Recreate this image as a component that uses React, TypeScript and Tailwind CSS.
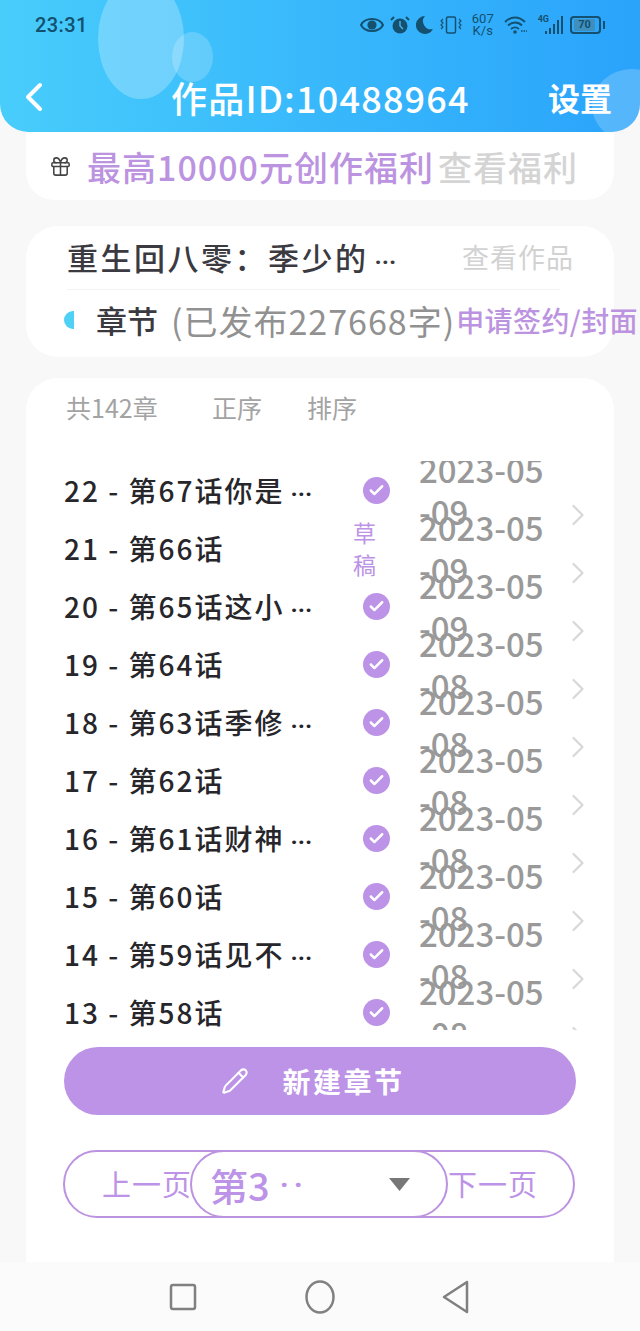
import React from "react";
import { ChevronRight, ChevronLeft, Check, Pencil, Gift } from "lucide-react";

const FONT = "font-['Noto_Sans_CJK_SC','Noto_Sans',sans-serif]";

const rows = [
  { t: "22 - 第67话你是", more: true, d: "2023-05-09", ok: true },
  { t: "21 - 第66话", d: "2023-05-09", ok: false },
  { t: "20 - 第65话这小", more: true, d: "2023-05-09", ok: true },
  { t: "19 - 第64话", d: "2023-05-08", ok: true },
  { t: "18 - 第63话季修", more: true, d: "2023-05-08", ok: true },
  { t: "17 - 第62话", d: "2023-05-08", ok: true },
  { t: "16 - 第61话财神", more: true, d: "2023-05-08", ok: true },
  { t: "15 - 第60话", d: "2023-05-08", ok: true },
  { t: "14 - 第59话见不", more: true, d: "2023-05-08", ok: true },
  { t: "13 - 第58话", d: "2023-05-08", ok: true },
  { t: "", d: "2023-05-08", ok: false, hidden: true },
];

function Dots({ className }: { className: string }) {
  return <span className={`font-['Roboto',sans-serif] font-bold tracking-normal leading-[0] ${className}`}>···</span>;
}

function StatusIcons() {
  const c = "#14506f";
  return (
    <div className="flex items-center text-[#14506f]">
      <svg width="24" height="16" viewBox="0 0 24 16" className="mr-[6px]">
        <path d="M1 8c4-8 18-8 22 0-4 8-18 8-22 0z" fill="none" stroke={c} strokeWidth="2" />
        <circle cx="12" cy="8" r="4.6" fill={c} />
      </svg>
      <svg width="20" height="20" viewBox="0 0 20 20" className="mr-[6px]">
        <circle cx="10" cy="11" r="7.5" fill={c} />
        <path d="M10 6v5l3 3" stroke="#4fb6e8" strokeWidth="1.4" fill="none" />
        <path d="M1 5l3-3M19 5l-3-3" stroke={c} strokeWidth="2" />
      </svg>
      <svg width="18" height="20" viewBox="0 0 18 20" className="mr-[6px]">
        <path d="M9 1a9 9 0 1 0 8 13A8 8 0 0 1 9 1z" fill={c} />
      </svg>
      <svg width="22" height="20" viewBox="0 0 22 20" className="mr-[10px]">
        <rect x="6.5" y="2" width="9" height="16" rx="1.5" fill="none" stroke={c} strokeWidth="1.5" />
        <path d="M3 4l-2 2 2 2-2 2 2 2-2 2M19 4l2 2-2 2 2 2-2 2 2 2" fill="none" stroke={c} strokeWidth="1.1" />
      </svg>
      <div className="flex flex-col items-center mr-[10px] text-[13px] leading-[12px] font-['Roboto',sans-serif]">
        <span>607</span>
        <span>K/s</span>
      </div>
      <svg width="24" height="18" viewBox="0 0 24 18">
        <path d="M1 6c6-6 14-6 20 0M4 9.5c4-4 10-4 14 0M7 13c2.500-2 5.500-2 8 0" fill="none" stroke={c} strokeWidth="1.8" />
        <circle cx="11" cy="16" r="1.8" fill={c} />
        <path d="M17 15h6" stroke={c} strokeWidth="1.4" strokeDasharray="1.500 1" />
      </svg>
      <span className="text-[9px] leading-none font-bold self-start mt-[2px] font-['Roboto',sans-serif] ml-[10px]">4G</span>
      <svg width="19" height="20" viewBox="0 0 19 20" className="ml-[-5px] mr-[7px]">
        <path d="M2 16v3M6 13v6M10 9v10M14 5v14M18 1v18" stroke={c} strokeWidth="2" />
      </svg>
      <div className="w-[31px] h-[18px] border-2 border-[#14506f] rounded-[4px] p-[1px] flex">
        <div className="w-[21px] h-full bg-[#3f8fbe] rounded-[1px] flex items-center justify-center text-[11px] font-bold font-['Roboto',sans-serif] ml-[1px]">70</div>
      </div>
      <div className="w-[2px] h-[8px] bg-[#14506f] ml-[2px]" />
    </div>
  );
}

function Row({ t, more, d, ok, hidden }: { t: string; more?: boolean; d: string; ok: boolean; hidden?: boolean }) {
  return (
    <div className="h-[58px] flex items-center">
      <div className="w-[288px] shrink-0 text-[28px] leading-[34px] tracking-[2px] font-medium text-[#26262b] whitespace-nowrap">
        {t}
        {more ? <Dots className="ml-[6px] text-[24px]" /> : null}
      </div>
      <div className="w-[48px] shrink-0 flex justify-center">
        {hidden ? null : ok ? (
          <span className="w-[27px] h-[27px] rounded-full bg-[#bc93e6] flex items-center justify-center">
            <Check size={17} strokeWidth={3.5} className="text-white" />
          </span>
        ) : (
          <span className="w-[24px] text-[23px] leading-[32px] text-[#bc93e6] mr-[22px]">草稿</span>
        )}
      </div>
      <div className="w-[125px] ml-[19px] text-[33px] leading-[42px] font-medium text-[#999999] text-left break-all shrink-0">{d}</div>
      <div className="w-[44px] shrink-0 flex justify-center mt-[50px] ml-[12px]">
        <ChevronRight size={36} strokeWidth={1.5} className="text-[#d8d8d8]" />
      </div>
    </div>
  );
}

export default function App() {
  return (
    <div className={`${FONT} w-[640px] h-[1331px] bg-[#f8f8f8] flex flex-col overflow-hidden`}>
      <header className="relative h-[132px] shrink-0 rounded-b-[28px] overflow-hidden bg-gradient-to-r from-[#48cdfb] to-[#2aa3fb] text-white">
        <div className="absolute left-[98px] top-[-22px] w-[86px] h-[121px] rounded-[50%] bg-white/25" />
        <div className="absolute left-[172px] top-[32px] w-[41px] h-[50px] rounded-[50%] bg-white/20" />
        <div className="absolute left-[592px] top-[69px] w-[80px] h-[73px] rounded-[50%] bg-white/20" />
        <div className="relative h-[50px] pl-[35px] pr-[35px] flex items-center justify-between">
          <span className="text-[20px] tracking-[0.4px] font-medium text-[#14506f] font-['Roboto',sans-serif]">23:31</span>
          <StatusIcons />
        </div>
        <div className="relative h-[82px] flex items-center pt-[12px]">
          <ChevronLeft size={48} strokeWidth={2} className="ml-[10px] shrink-0" />
          <div className="ml-[113px] text-[36px] leading-[40px] tracking-[1.2px] font-medium whitespace-nowrap">作品ID:10488964</div>
          <div className="ml-auto mr-[28px] text-[32px] leading-[40px] font-bold">设置</div>
        </div>
      </header>

      <section className="mx-[26px] h-[68px] shrink-0 bg-white rounded-b-[28px] flex items-center pl-[23px]">
        <Gift size={23} strokeWidth={1.6} className="text-[#444] shrink-0" />
        <span className="ml-[15px] text-[34px] tracking-[1px] font-medium text-[#bc93e0] whitespace-nowrap">最高10000元创作福利</span>
        <span className="ml-[4px] text-[34px] tracking-[1px] font-medium text-[#d4d4d4] whitespace-nowrap">查看福利</span>
      </section>

      <section className="mx-[26px] mt-[26px] h-[131px] shrink-0 bg-white rounded-[32px]">
        <div className="mx-[41px] h-[63px] flex items-center justify-between">
          <span className="text-[31px] font-medium text-[#3a3a40] whitespace-nowrap tracking-[2.5px]">
            重生回八零：季少的
            <Dots className="ml-[6px] text-[24px]" />
          </span>
          <span className="text-[27px] tracking-[1px] text-[#d2d2d2] whitespace-nowrap mr-[-1px]">查看作品</span>
        </div>
        <div className="ml-[41px] w-[493px] h-px bg-[#f3f3f3]" />
        <div className="h-[64px] flex items-center pl-[38px] pb-[4px] whitespace-nowrap">
          <span className="w-[10px] h-[18px] rounded-l-full bg-[#4fd0f5] shrink-0" />
          <span className="ml-[22px] text-[31px] font-medium text-[#3a3a40]">章节</span>
          <span className="ml-[13px] text-[34px] tracking-[1px] text-[#919191]">(已发布227668字)</span>
          <span className="ml-[1px] text-[28px] tracking-[0.4px] font-medium text-[#bc93e0]">申请签约/封面</span>
        </div>
      </section>

      <section className="mx-[26px] mt-[21px] flex-1 min-h-0 bg-white rounded-t-[32px] px-[38px] flex flex-col">
        <div className="h-[60px] shrink-0 flex items-center text-[25px] text-[#a3a3a3] whitespace-nowrap">
          <span className="w-[146px] ml-[2px]">共142章</span>
          <span className="w-[95px]">正序</span>
          <span>排序</span>
        </div>
        <div className="h-[569px] mt-[23px] mr-[-38px] shrink-0 overflow-hidden">
          <div>
            {rows.map((r, i) => (
              <Row key={i} {...r} />
            ))}
          </div>
        </div>
        <button className="mt-[17px] h-[68px] shrink-0 rounded-full bg-[#bc93e6] text-white flex items-center justify-center pr-[14px]">
          <Pencil size={28} strokeWidth={1.8} />
          <span className="ml-[33px] text-[28px] font-bold tracking-[2.5px]">新建章节</span>
        </button>
        <div className="mt-[35px] w-[512px] ml-[-1px] h-[68px] shrink-0 border-2 border-[#bc93e0] rounded-full flex items-center whitespace-nowrap text-[#bc93e6]">
          <span className="w-[125px] pl-[37px] text-[29px] tracking-[1px]">上一页</span>
          <div className="w-[258px] h-[68px] shrink-0 border-2 border-[#bc93e0] rounded-full flex items-center pl-[18px]">
            <span className="text-[38px] font-medium">第3</span>
            <span className="ml-[10px] text-[30px] tracking-[5px] font-bold font-['Roboto',sans-serif]">··</span>
            <svg width="21" height="13" viewBox="0 0 21 13" className="ml-[81px]">
              <path d="M0 0h21L10.500 13z" fill="#777" />
            </svg>
          </div>
          <span className="text-[29px] tracking-[1px]">下一页</span>
        </div>
      </section>

      <nav className="h-[69px] shrink-0 bg-[#fbfbfb] flex items-center justify-center text-[#808080]">
        <svg width="28" height="28" viewBox="0 0 28 28" className="mr-[107px]">
          <rect x="2" y="2" width="24" height="24" rx="2" fill="none" stroke="currentColor" strokeWidth="2.5" />
        </svg>
        <svg width="32" height="36" viewBox="0 0 32 36" className="mr-[105px]">
          <ellipse cx="16" cy="18" rx="13.500" ry="15.500" fill="none" stroke="currentColor" strokeWidth="2.5" />
        </svg>
        <svg width="30" height="36" viewBox="0 0 30 36">
          <path d="M26 3L3 18l23 15z" fill="none" stroke="currentColor" strokeWidth="2.5" strokeLinejoin="round" />
        </svg>
      </nav>
    </div>
  );
}
